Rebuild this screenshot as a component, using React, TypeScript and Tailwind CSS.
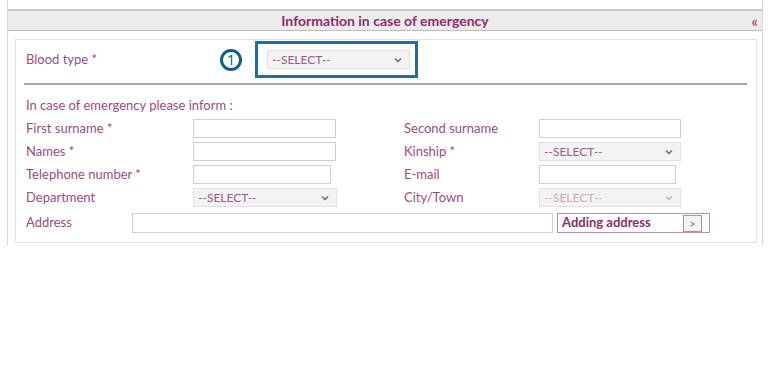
import React from "react";

const Chevron = ({ light }: { light?: boolean }) => (
  <svg width="8" height="6" viewBox="0 0 8 6" className="shrink-0">
    <path d="M1 1.5 L4 4.5 L7 1.5" fill="none" stroke={light ? "#c9a9c0" : "#8e4f7d"} strokeWidth="1.4" />
  </svg>
);

const Select = ({ w, light }: { w: string; light?: boolean }) => (
  <div
    className={`${w} h-[19px] flex items-center justify-between pl-[4px] pr-[7px] bg-[#f3f3f3] border border-[#e1e1e1] ${
      light ? "text-[#c9a9c0]" : "text-[#9a5a89]"
    } text-[12px]`}
  >
    <span>--SELECT--</span>
    <Chevron light={light} />
  </div>
);

const Input = ({ w }: { w: string }) => (
  <div className={`${w} h-[19px] bg-white border border-[#cfcfcf]`} />
);

export default function App() {
  return (
    <div className="w-[768px] h-[377px] bg-white font-['Lato',sans-serif] text-[13px] text-[#9b4c81]">
      <div className="ml-[7px] w-[756px] h-[245px] border-x border-[#d9d9d9] pt-[9px]">
        <div className="relative h-[22px] border-t-2 border-t-[#c6c6c6] border-b border-b-[#bdbdbd] bg-[#ececec] flex items-center justify-center">
          <span className="font-bold text-[#8a2d6c] text-[14px]">Information in case of emergency</span>
          <span className="absolute right-[4px] top-0 h-full flex items-center text-[#8a2d6c] text-[16px] leading-none">«</span>
        </div>
        <div className="mt-[8px] ml-[7px] w-[742px] h-[204px] border border-[#e2e2e2]">
          <div className="mt-px h-[37px] flex items-center">
            <div className="w-[194px] pl-[10px]">Blood type *</div>
            <div className="ml-[10px] w-[22px] h-[22px] rounded-full border-[3px] border-[#145a8a] flex items-center justify-center text-[#145a8a] text-[15px] leading-none font-['Open_Sans',sans-serif]">
              1
            </div>
            <div className="ml-[13px] w-[163px] h-[37px] border-[3px] border-[#1d6ea4] flex items-center pl-[9px]">
              <Select w="w-[143px]" />
            </div>
          </div>
          <div className="mt-[5px] ml-[8px] w-[723px] h-[2px] bg-[#a9a9a9]" />
          <div className="mt-[9px] h-[23px] flex items-center pl-[10px]">In case of emergency please inform :</div>
          {[
            ["First surname *", <Input w="w-[143px]" />, "Second surname", <Input w="w-[142px]" />],
            ["Names *", <Input w="w-[143px]" />, "Kinship *", <Select w="w-[142px]" />],
            ["Telephone number *", <Input w="w-[138px]" />, "E-mail", <Input w="w-[137px]" />],
            ["Department", <Select w="w-[144px]" />, "City/Town", <Select w="w-[142px]" light />],
          ].map((r, i) => (
            <div key={i} className="h-[23px] flex items-center">
              <div className="w-[177px] pl-[10px]">{r[0]}</div>
              <div className="w-[211px]">{r[1]}</div>
              <div className="w-[135px]">{r[2]}</div>
              <div>{r[3]}</div>
            </div>
          ))}
          <div className="mt-[3px] h-[22px] flex items-center">
            <div className="w-[116px] pl-[10px]">Address</div>
            <div className="w-[421px] h-[20px] bg-white border border-[#cfcfcf]" />
            <div className="ml-[4px] w-[153px] h-[20px] border border-[#b98fae] flex items-center pl-[4px] pr-[7px] justify-between">
              <span className="font-bold text-[#8a2d6c] text-[13px]">Adding address</span>
              <div className="w-[19px] h-[17px] bg-[#f4f4f4] border border-[#9a9a9a] flex items-center justify-center text-[#777] text-[11px] leading-none">
                &gt;
              </div>
            </div>
          </div>
        </div>
      </div>
    </div>
  );
}
